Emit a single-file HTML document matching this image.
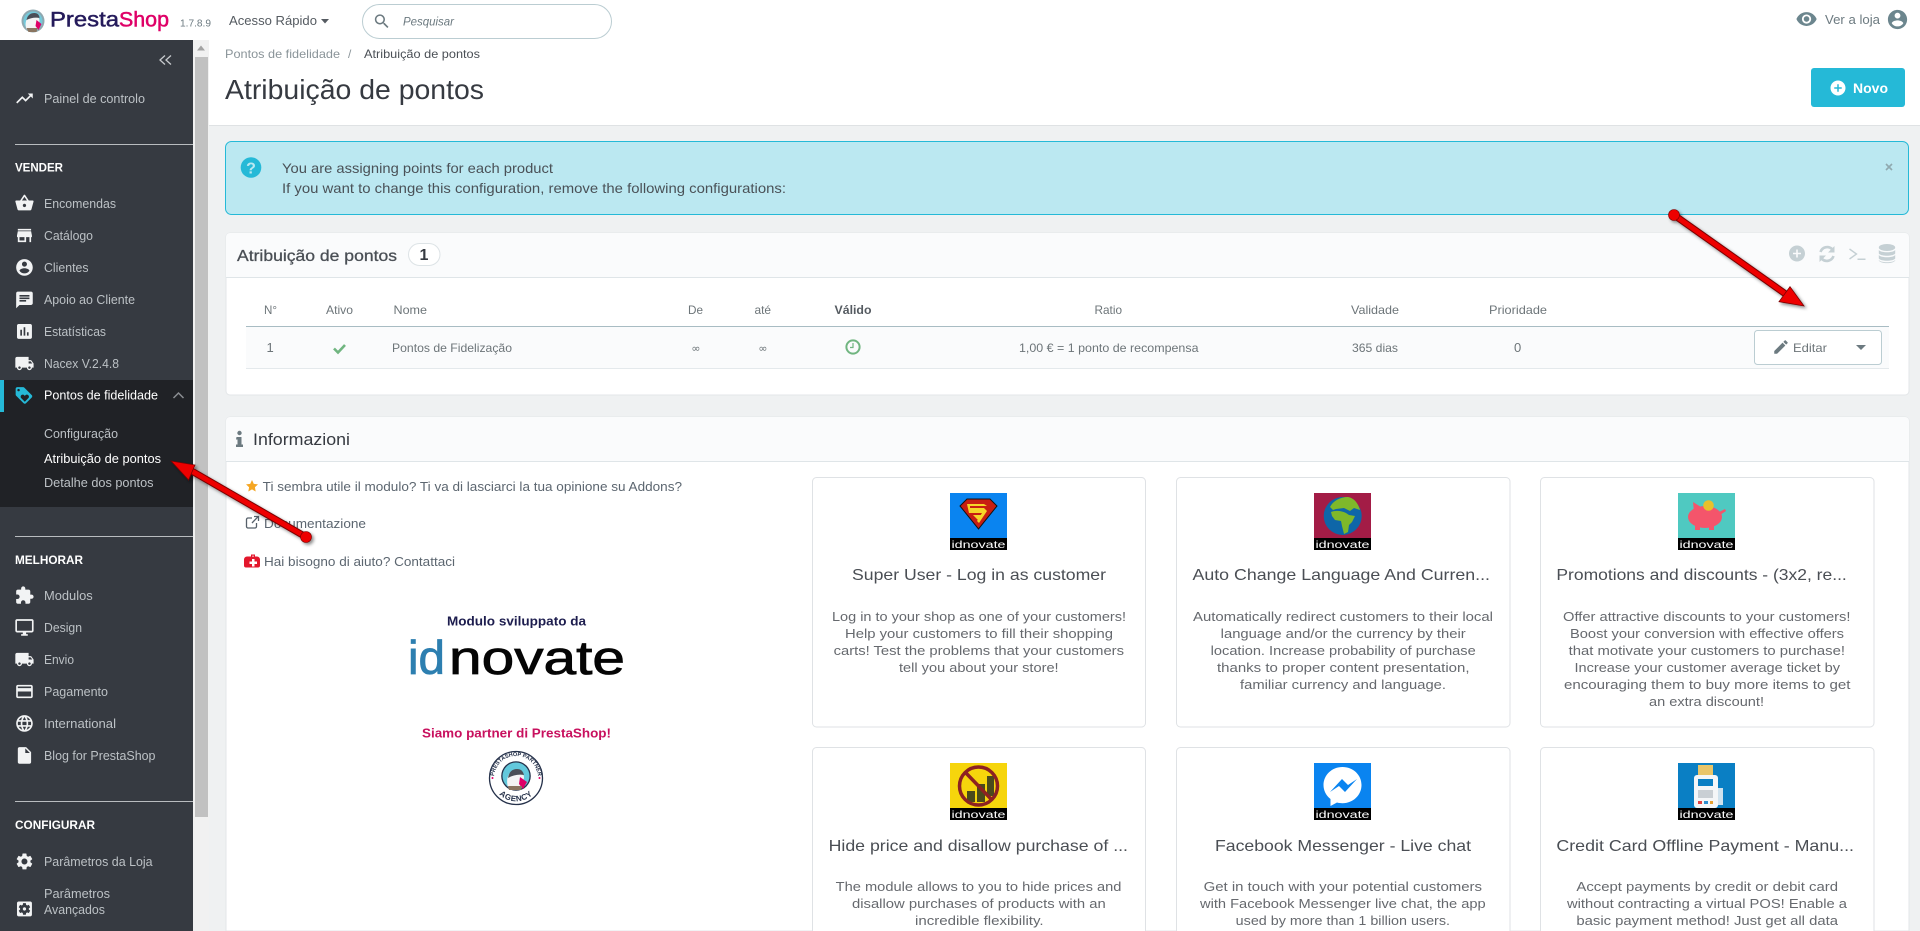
<!DOCTYPE html>
<html lang="pt">
<head>
<meta charset="utf-8">
<title>Atribuição de pontos</title>
<style>
html,body{margin:0;padding:0;width:1920px;height:931px;overflow:hidden;background:#eff1f2}
svg{display:block}
text{font-family:"Liberation Sans",sans-serif}
.n{font-size:13px;fill:#bcc1c5}
.h{font-size:12px;font-weight:700;fill:#fff}
.ic{fill:#f2f3f4}
.th{font-size:12px;fill:#6d7579}
.td{font-size:12px;fill:#6d7579}
.ln{font-size:13px;fill:#5c6670}
.ct{font-size:16px;fill:#4a4e54}
.cd{font-size:12.5px;fill:#66696e}
.lb{font-size:10px;fill:#fff}
</style>
</head>
<body>
<svg xmlns="http://www.w3.org/2000/svg" width="1920" height="931" viewBox="0 0 1920 931">
<defs>
<filter id="sh" x="-20%" y="-20%" width="140%" height="140%"><feDropShadow dx="2" dy="2" stdDeviation="1.5" flood-color="#000" flood-opacity=".45"/></filter>
<path id="bar" d="M0 0h57v12H0z" fill="#000"/>
<path id="ship" d="M20 8h-3V4H3c-1.1 0-2 .9-2 2v11h2c0 1.66 1.34 3 3 3s3-1.34 3-3h6c0 1.66 1.34 3 3 3s3-1.34 3-3h2v-5l-3-4zM6 18.5c-.83 0-1.5-.67-1.5-1.5s.67-1.5 1.5-1.5 1.5.67 1.5 1.5-.67 1.5-1.5 1.5zm13.5-9l1.96 2.5H17V9.5h2.5zm-1.5 9c-.83 0-1.5-.67-1.5-1.5s.67-1.5 1.5-1.5 1.5.67 1.5 1.5-.67 1.5-1.5 1.5z"/>
<path id="acc" d="M12 2C6.48 2 2 6.48 2 12s4.48 10 10 10 10-4.48 10-10S17.52 2 12 2zm0 3c1.66 0 3 1.34 3 3s-1.34 3-3 3-3-1.34-3-3 1.34-3 3-3zm0 14.2c-2.5 0-4.71-1.28-6-3.22.03-1.99 4-3.08 6-3.08 1.99 0 5.97 1.09 6 3.08-1.29 1.94-3.5 3.22-6 3.22z"/>
<path id="add" d="M12 2C6.48 2 2 6.48 2 12s4.48 10 10 10 10-4.48 10-10S17.52 2 12 2zm5 11h-4v4h-2v-4H7v-2h4V7h2v4h4v2z"/>
<path id="arcT" d="M495.500 786A22 22 0 1 1 536.500 786"/>
<path id="arcB" d="M494.500 788A24 24 0 0 0 537.500 788"/>
</defs>

<!-- base -->
<rect width="1920" height="931" fill="#eff1f2"/>

<!-- header -->
<rect width="1920" height="40" fill="#fff"/>
<circle cx="33" cy="21" r="11.500" fill="#8fa8b0"/>
<circle cx="33" cy="21" r="9.500" fill="#74c9da"/>
<path d="M26.500 29c-2-5-1-12 6-14 5-1 7 3 7 6l-2 7c-3 3-8 3-11 1z" fill="#f4f4f4"/>
<path d="M26.500 20c1-5 4-7 8-7 3 0 5 2 5 5-4-1-9 0-13 2z" fill="#4a4f57"/>
<path d="M36.500 20l5 4-3 6-3-4z" fill="#df0067"/>
<path d="M26.500 28h11l-1 4h-8z" fill="#8a7560"/>
<text x="50" y="26.500" font-size="21" fill="#251b5b" stroke="#251b5b" stroke-width=".5" textLength="69" lengthAdjust="spacingAndGlyphs">Presta</text>
<text x="119" y="26.500" font-size="21" fill="#df0067" stroke="#df0067" stroke-width=".5" textLength="50" lengthAdjust="spacingAndGlyphs">Shop</text>
<text x="180" y="26.500" font-size="10.500" fill="#6c7a80" textLength="31" lengthAdjust="spacingAndGlyphs">1.7.8.9</text>
<text x="229" y="25" font-size="13" fill="#555b61" textLength="88" lengthAdjust="spacingAndGlyphs">Acesso Rápido</text>
<path d="M321 19h8l-4 4.500z" fill="#555b61"/>
<rect x="362.500" y="4.500" width="249" height="34" rx="17" fill="#fff" stroke="#bbcdd2"/>
<path transform="translate(372.500,12) scale(.78)" fill="#6c7a80" d="M15.500 14h-.79l-.28-.27C15.410 12.590 16 11.110 16 9.500 16 5.910 13.090 3 9.500 3S3 5.910 3 9.500 5.910 16 9.500 16c1.610 0 3.090-.59 4.230-1.570l.27.28v.79l5 4.990L20.490 19l-4.990-5zm-6 0C7.010 14 5 11.990 5 9.500S7.010 5 9.500 5 14 7.010 14 9.500 11.990 14 9.500 14z"/>
<text x="403" y="25.500" font-size="12" font-style="italic" fill="#6c7a80" textLength="51" lengthAdjust="spacingAndGlyphs">Pesquisar</text>
<path transform="translate(1795.500,8) scale(.92)" fill="#6c868e" d="M12 4.500C7 4.500 2.730 7.610 1 12c1.730 4.390 6 7.500 11 7.500s9.270-3.110 11-7.500c-1.730-4.390-6-7.500-11-7.500zM12 17c-2.760 0-5-2.240-5-5s2.240-5 5-5 5 2.240 5 5-2.240 5-5 5zm0-8c-1.660 0-3 1.340-3 3s1.340 3 3 3 3-1.340 3-3-1.340-3-3-3z"/>
<text x="1825" y="24" font-size="13" fill="#6c7a80" textLength="55" lengthAdjust="spacingAndGlyphs">Ver a loja</text>
<use href="#acc" transform="translate(1886,8) scale(.96)" fill="#6c868e"/>

<!-- scrollbar -->
<rect x="193" y="40" width="16" height="891" fill="#f1f1f1"/>
<path d="M201 45.500l4 5h-8z" fill="#a3a3a3"/>
<rect x="195" y="57" width="13" height="760" fill="#c1c1c1"/>

<!-- sidebar -->
<rect x="0" y="40" width="193" height="891" fill="#363a41"/>
<path d="M165 55.500l-5 4.500 5 4.500M171 55.500l-5 4.500 5 4.500" fill="none" stroke="#c7cacd" stroke-width="1.300"/>
<path class="ic" transform="translate(14.500,88.500) scale(.83)" d="M16 6l2.290 2.290-4.880 4.880-4-4L2 16.590 3.410 18l6-6 4 4 6.300-6.290L22 12V6z"/>
<text class="n" x="44" y="103" textLength="101" lengthAdjust="spacingAndGlyphs">Painel de controlo</text>
<rect x="15" y="144" width="178" height="1" fill="#b9bcbf"/>
<text class="h" x="15" y="171.500" textLength="48" lengthAdjust="spacingAndGlyphs">VENDER</text>
<path class="ic" transform="translate(14.500,193) scale(.83)" d="M17.210 9l-4.380-6.560c-.19-.28-.51-.42-.83-.42-.32 0-.64.14-.83.43L6.790 9H2c-.55 0-1 .45-1 1 0 .09.01.18.04.27l2.540 9.270c.23.84 1 1.460 1.920 1.460h13c.92 0 1.690-.62 1.930-1.460l2.540-9.270L23 10c0-.55-.45-1-1-1h-4.790zM9 9l3-4.400L15 9H9zm3 8c-1.100 0-2-.9-2-2s.9-2 2-2 2 .9 2 2-.9 2-2 2z"/>
<text class="n" x="44" y="208" textLength="72" lengthAdjust="spacingAndGlyphs">Encomendas</text>
<path class="ic" transform="translate(14.500,225.500) scale(.83)" d="M20 4H4v2h16V4zm1 10v-2l-1-5H4l-1 5v2h1v6h10v-6h4v6h2v-6h1zm-9 4H6v-4h6v4z"/>
<text class="n" x="44" y="240" textLength="49" lengthAdjust="spacingAndGlyphs">Catálogo</text>
<use href="#acc" class="ic" transform="translate(14.500,257.500) scale(.83)"/>
<text class="n" x="44" y="272" textLength="44.500" lengthAdjust="spacingAndGlyphs">Clientes</text>
<path class="ic" transform="translate(14.500,290) scale(.83)" d="M20 2H4c-1.100 0-1.990.9-1.990 2L2 22l4-4h14c1.100 0 2-.9 2-2V4c0-1.100-.9-2-2-2zM6 9h12v2H6V9zm8 5H6v-2h8v2zm4-6H6V6h12v2z"/>
<text class="n" x="44" y="304" textLength="91" lengthAdjust="spacingAndGlyphs">Apoio ao Cliente</text>
<path class="ic" transform="translate(14.500,321.500) scale(.83)" d="M19 3H5c-1.100 0-2 .9-2 2v14c0 1.100.9 2 2 2h14c1.100 0 2-.9 2-2V5c0-1.100-.9-2-2-2zM9 17H7v-7h2v7zm4 0h-2V7h2v10zm4 0h-2v-4h2v4z"/>
<text class="n" x="44" y="336" textLength="62" lengthAdjust="spacingAndGlyphs">Estatísticas</text>
<use href="#ship" class="ic" transform="translate(14.500,353.500) scale(.83)"/>
<text class="n" x="44" y="368" textLength="75" lengthAdjust="spacingAndGlyphs">Nacex V.2.4.8</text>
<rect x="0" y="380" width="193" height="127" fill="#202226"/>
<rect x="0" y="380" width="4" height="32" fill="#25b9d7"/>
<path fill="#25b9d7" transform="translate(14,385.500) scale(.83)" d="M21.410 11.580l-9-9C12.050 2.220 11.550 2 11 2H4c-1.100 0-2 .9-2 2v7c0 .55.22 1.050.59 1.420l9 9c.36.36.86.58 1.410.58.55 0 1.050-.22 1.410-.59l7-7c.37-.36.59-.86.59-1.410 0-.55-.23-1.060-.59-1.420zM5.500 7C4.670 7 4 6.330 4 5.500S4.670 4 5.500 4 7 4.670 7 5.500 6.330 7 5.500 7zm11.770 8.270L13 19.540l-4.270-4.270C8.280 14.810 8 14.190 8 13.500c0-1.380 1.120-2.500 2.500-2.500.69 0 1.320.28 1.770.74l.73.72.73-.73c.45-.45 1.080-.73 1.770-.73 1.380 0 2.500 1.120 2.500 2.500 0 .69-.28 1.320-.73 1.770z"/>
<text x="44" y="399.500" font-size="13" fill="#fff" textLength="114" lengthAdjust="spacingAndGlyphs">Pontos de fidelidade</text>
<path d="M173.500 398l5-5 5 5" fill="none" stroke="#8a8d91" stroke-width="1.500"/>
<text class="n" x="44" y="438" textLength="74" lengthAdjust="spacingAndGlyphs">Configuração</text>
<text x="44" y="463" font-size="13" fill="#fff" textLength="117" lengthAdjust="spacingAndGlyphs">Atribuição de pontos</text>
<text class="n" x="44" y="487" textLength="109.500" lengthAdjust="spacingAndGlyphs">Detalhe dos pontos</text>
<rect x="15" y="536" width="178" height="1" fill="#b9bcbf"/>
<text class="h" x="15" y="564" textLength="68" lengthAdjust="spacingAndGlyphs">MELHORAR</text>
<path class="ic" transform="translate(14.500,585.500) scale(.83)" d="M20.500 11H19V7c0-1.100-.9-2-2-2h-4V3.500C13 2.120 11.880 1 10.500 1S8 2.120 8 3.500V5H4c-1.100 0-1.990.9-1.990 2v3.800H3.500c1.490 0 2.700 1.210 2.700 2.700s-1.210 2.700-2.700 2.700H2V20c0 1.100.9 2 2 2h3.800v-1.500c0-1.490 1.210-2.700 2.700-2.700 1.490 0 2.700 1.210 2.700 2.700V22H17c1.100 0 2-.9 2-2v-4h1.500c1.380 0 2.500-1.120 2.500-2.500S21.880 11 20.500 11z"/>
<text class="n" x="44" y="600" textLength="48.700" lengthAdjust="spacingAndGlyphs">Modulos</text>
<path class="ic" transform="translate(14.500,617.500) scale(.83)" d="M21 2H3c-1.100 0-2 .9-2 2v12c0 1.100.9 2 2 2h7v2H8v2h8v-2h-2v-2h7c1.100 0 2-.9 2-2V4c0-1.100-.9-2-2-2zm0 14H3V4h18v12z"/>
<text class="n" x="44" y="632" textLength="38" lengthAdjust="spacingAndGlyphs">Design</text>
<use href="#ship" class="ic" transform="translate(14.500,649.500) scale(.83)"/>
<text class="n" x="44" y="664" textLength="30" lengthAdjust="spacingAndGlyphs">Envio</text>
<path class="ic" transform="translate(14.500,681.500) scale(.83)" d="M20 4H4c-1.110 0-1.990.89-1.990 2L2 18c0 1.110.89 2 2 2h16c1.110 0 2-.89 2-2V6c0-1.110-.89-2-2-2zm0 14H4v-6h16v6zm0-10H4V6h16v2z"/>
<text class="n" x="44" y="696" textLength="64" lengthAdjust="spacingAndGlyphs">Pagamento</text>
<path class="ic" transform="translate(14.500,713.500) scale(.83)" d="M11.990 2C6.470 2 2 6.480 2 12s4.470 10 9.990 10C17.520 22 22 17.520 22 12S17.520 2 11.990 2zm6.930 6h-2.950c-.32-1.250-.78-2.450-1.380-3.560 1.840.63 3.370 1.910 4.330 3.560zM12 4.040c.83 1.200 1.480 2.530 1.910 3.960h-3.820c.43-1.430 1.080-2.760 1.910-3.960zM4.260 14C4.100 13.360 4 12.690 4 12s.1-1.360.26-2h3.380c-.08.66-.14 1.320-.14 2 0 .68.06 1.340.14 2H4.260zm.82 2h2.950c.32 1.250.78 2.450 1.380 3.560-1.840-.63-3.370-1.900-4.330-3.560zm2.950-8H5.080c.96-1.660 2.490-2.930 4.330-3.560C8.810 5.550 8.350 6.750 8.030 8zM12 19.960c-.83-1.200-1.480-2.530-1.910-3.960h3.820c-.43 1.430-1.080 2.760-1.910 3.960zM14.340 14H9.660c-.09-.66-.16-1.320-.16-2 0-.68.07-1.350.16-2h4.680c.09.65.16 1.320.16 2 0 .68-.07 1.340-.16 2zm.25 5.560c.6-1.110 1.060-2.310 1.380-3.560h2.950c-.96 1.650-2.490 2.930-4.330 3.560zM16.360 14c.08-.66.14-1.320.14-2 0-.68-.06-1.340-.14-2h3.380c.16.64.26 1.310.26 2s-.1 1.360-.26 2h-3.380z"/>
<text class="n" x="44" y="728" textLength="72" lengthAdjust="spacingAndGlyphs">International</text>
<path class="ic" transform="translate(14.500,745.500) scale(.83)" d="M6 2c-1.100 0-1.990.9-1.990 2L4 20c0 1.100.89 2 1.990 2H18c1.100 0 2-.9 2-2V8l-6-6H6zm7 7V3.500L18.500 9H13z"/>
<text class="n" x="44" y="760" textLength="111.500" lengthAdjust="spacingAndGlyphs">Blog for PrestaShop</text>
<rect x="15" y="801" width="178" height="1" fill="#b9bcbf"/>
<text class="h" x="15" y="829" textLength="80" lengthAdjust="spacingAndGlyphs">CONFIGURAR</text>
<path class="ic" transform="translate(14.500,851.500) scale(.83)" d="M19.140 12.940c.04-.3.06-.61.06-.94 0-.32-.02-.64-.07-.94l2.030-1.580c.18-.14.23-.41.12-.61l-1.920-3.320c-.12-.22-.37-.29-.59-.22l-2.390.96c-.5-.38-1.030-.7-1.620-.94l-.36-2.540c-.04-.24-.24-.41-.48-.41h-3.840c-.24 0-.43.17-.47.41l-.36 2.540c-.59.24-1.130.57-1.620.94l-2.390-.96c-.22-.08-.47 0-.59.22L2.740 8.870c-.12.21-.08.47.12.61l2.030 1.580c-.05.3-.09.63-.09.94s.02.64.07.94l-2.030 1.580c-.18.14-.23.41-.12.61l1.920 3.320c.12.22.37.29.59.22l2.390-.96c.5.38 1.030.7 1.620.94l.36 2.540c.05.24.24.41.48.41h3.840c.24 0 .44-.17.47-.41l.36-2.540c.59-.24 1.130-.56 1.620-.94l2.390.96c.22.08.47 0 .59-.22l1.920-3.320c.12-.22.07-.47-.12-.61l-2.010-1.580zM12 15.600c-1.980 0-3.600-1.620-3.600-3.600s1.620-3.600 3.600-3.600 3.600 1.620 3.600 3.600-1.620 3.600-3.600 3.600z"/>
<text class="n" x="44" y="866" textLength="108.600" lengthAdjust="spacingAndGlyphs">Parâmetros da Loja</text>
<text class="n" x="44" y="898" textLength="66" lengthAdjust="spacingAndGlyphs">Parâmetros</text>
<text class="n" x="44" y="914" textLength="61" lengthAdjust="spacingAndGlyphs">Avançados</text>
<path class="ic" transform="translate(14.500,899) scale(.83)" d="M12 10c-1.100 0-2 .9-2 2s.9 2 2 2 2-.9 2-2-.9-2-2-2zm7-7H5c-1.110 0-2 .9-2 2v14c0 1.100.89 2 2 2h14c1.110 0 2-.9 2-2V5c0-1.100-.89-2-2-2zm-1.750 9c0 .23-.02.46-.05.68l1.480 1.160c.13.11.17.3.08.45l-1.400 2.420c-.09.15-.27.21-.43.15l-1.740-.7c-.36.28-.76.51-1.180.69l-.26 1.850c-.03.17-.18.3-.35.3h-2.800c-.17 0-.32-.13-.35-.29l-.26-1.850c-.43-.18-.82-.41-1.180-.69l-1.740.7c-.16.06-.34 0-.43-.15l-1.400-2.420c-.09-.15-.05-.34.08-.45l1.480-1.160c-.03-.23-.05-.46-.05-.69 0-.23.02-.46.05-.68l-1.480-1.160c-.13-.11-.17-.3-.08-.45l1.400-2.420c.09-.15.27-.21.43-.15l1.740.7c.36-.28.76-.51 1.180-.69l.26-1.850c.03-.17.18-.3.35-.3h2.800c.17 0 .32.13.35.29l.26 1.850c.43.18.82.41 1.180.69l1.740-.7c.16-.06.34 0 .43.15l1.400 2.420c.09.15.05.34-.08.45l-1.480 1.160c.03.23.05.46.05.69z"/>

<!-- page head -->
<rect x="209" y="40" width="1711" height="85" fill="#fff"/>
<rect x="209" y="125" width="1711" height="1" fill="#dfe2e4"/>
<text x="225" y="58" font-size="12" fill="#8a9499" textLength="115" lengthAdjust="spacingAndGlyphs">Pontos de fidelidade</text>
<text x="348" y="58" font-size="12" fill="#8a9499">/</text>
<text x="364" y="58" font-size="12" fill="#4a4f55" textLength="116" lengthAdjust="spacingAndGlyphs">Atribuição de pontos</text>
<text x="225" y="99" font-size="28" fill="#363a41" textLength="259" lengthAdjust="spacingAndGlyphs">Atribuição de pontos</text>
<rect x="1811" y="68" width="94" height="39" rx="3" fill="#25b9d7"/>
<use href="#add" fill="#fff" transform="translate(1829,79) scale(.75)"/>
<text x="1853" y="93" font-size="14" font-weight="700" fill="#fff" textLength="35" lengthAdjust="spacingAndGlyphs">Novo</text>

<!-- alert -->
<rect x="225.500" y="141.500" width="1683" height="73" rx="6" fill="#bbe8f1" stroke="#25b9d7"/>
<circle cx="251" cy="167.500" r="10.300" fill="#25b9d7"/>
<text x="251" y="173.500" font-size="16" font-weight="700" fill="#bbe8f1" text-anchor="middle">?</text>
<text x="282" y="173" font-size="14" fill="#4a5157" textLength="271" lengthAdjust="spacingAndGlyphs">You are assigning points for each product</text>
<text x="282" y="193" font-size="14" fill="#4a5157" textLength="504" lengthAdjust="spacingAndGlyphs">If you want to change this configuration, remove the following configurations:</text>
<path d="M1886 164l6 6M1892 164l-6 6" stroke="#8fa9af" stroke-width="1.600" fill="none"/>

<!-- panel 1 -->
<rect x="226" y="233" width="1683" height="162" rx="4" fill="#fff" stroke="#e3e6e8"/>
<path d="M226 277v-40a4 4 0 0 1 4-4h1675a4 4 0 0 1 4 4v40z" fill="#fafbfc"/>
<rect x="226" y="277" width="1683" height="1" fill="#dfe5e8"/>
<text x="237" y="261" font-size="16" fill="#4a4f55" stroke="#4a4f55" stroke-width=".3" textLength="160" lengthAdjust="spacingAndGlyphs">Atribuição de pontos</text>
<rect x="408.500" y="243.500" width="31.500" height="22" rx="11" fill="#fff" stroke="#dde3e6"/>
<text x="424" y="260" font-size="16" font-weight="700" fill="#363a41" text-anchor="middle">1</text>
<use href="#add" fill="#c5d0d4" transform="translate(1787.400,243.900) scale(.8)"/>
<path d="M1820.500 252a7 7 0 0 1 11.500-3M1833.500 256a7 7 0 0 1-11.500 3" fill="none" stroke="#c5d0d4" stroke-width="2.600"/>
<path d="M1834.500 246v6.500h-6.500zM1819.500 262v-6.500h6.500z" fill="#c5d0d4"/>
<path d="M1849.500 249l7 5-7 5" fill="none" stroke="#c5d0d4" stroke-width="1.400"/>
<rect x="1857.500" y="258.500" width="8" height="1.500" fill="#c5d0d4"/>
<g fill="#c5d0d4">
<ellipse cx="1887" cy="247.500" rx="8.200" ry="3.500"/>
<path d="M1878.800 250c2 3 14.400 3 16.400 0v3.500c-2 3-14.400 3-16.400 0zM1878.800 255c2 3 14.400 3 16.400 0v3.500c-2 3-14.400 3-16.400 0zM1878.800 260c2 3 14.400 3 16.400 0v.5c-2 3.500-14.400 3.500-16.400 0z"/>
</g>
<text class="th" x="264" y="314" textLength="13" lengthAdjust="spacingAndGlyphs">N°</text>
<text class="th" x="326" y="314" textLength="27" lengthAdjust="spacingAndGlyphs">Ativo</text>
<text class="th" x="393.500" y="314" textLength="33.500" lengthAdjust="spacingAndGlyphs">Nome</text>
<text class="th" x="688" y="314" textLength="15" lengthAdjust="spacingAndGlyphs">De</text>
<text class="th" x="754.500" y="314" textLength="16.500" lengthAdjust="spacingAndGlyphs">até</text>
<text x="834.500" y="314" font-size="12" font-weight="700" fill="#555b61" textLength="37" lengthAdjust="spacingAndGlyphs">Válido</text>
<text class="th" x="1094.500" y="314" textLength="27.500" lengthAdjust="spacingAndGlyphs">Ratio</text>
<text class="th" x="1351" y="314" textLength="48" lengthAdjust="spacingAndGlyphs">Validade</text>
<text class="th" x="1489" y="314" textLength="58" lengthAdjust="spacingAndGlyphs">Prioridade</text>
<rect x="246" y="327" width="1643" height="41" fill="#fafbfc"/>
<rect x="246" y="326" width="1643" height="1" fill="#a8bcc3"/>
<rect x="246" y="368" width="1643" height="1" fill="#e4e9ec"/>
<text x="266.500" y="352" font-size="13" fill="#6d7579">1</text>
<path d="M334 348.500l4 4 7-7.500" fill="none" stroke="#70b580" stroke-width="2.600"/>
<text class="td" x="392" y="352" textLength="120" lengthAdjust="spacingAndGlyphs">Pontos de Fidelização</text>
<text x="696" y="352" font-size="11" fill="#6d7579" text-anchor="middle" style="font-family:'DejaVu Sans',sans-serif">∞</text>
<text x="763" y="352" font-size="11" fill="#6d7579" text-anchor="middle" style="font-family:'DejaVu Sans',sans-serif">∞</text>
<circle cx="853" cy="347" r="6.600" fill="none" stroke="#70b580" stroke-width="2"/>
<path d="M853 343v4.500h-3" fill="none" stroke="#70b580" stroke-width="1.200"/>
<text class="td" x="1019" y="352" textLength="179.500" lengthAdjust="spacingAndGlyphs">1,00 € = 1 ponto de recompensa</text>
<text class="td" x="1352" y="352" textLength="46" lengthAdjust="spacingAndGlyphs">365 dias</text>
<text x="1514" y="352" font-size="13" fill="#6d7579">0</text>
<rect x="1754.500" y="330.500" width="127" height="34" rx="3" fill="#fff" stroke="#bbcdd2"/>
<path fill="#6c7a80" transform="translate(1772,338) scale(.75)" d="M3 17.250V21h3.750L17.810 9.940l-3.750-3.750L3 17.250zM20.710 7.040c.39-.39.39-1.020 0-1.410l-2.340-2.340c-.39-.39-1.020-.39-1.410 0l-1.830 1.830 3.750 3.750 1.830-1.830z"/>
<text x="1793" y="352" font-size="12" fill="#6d7579" textLength="34" lengthAdjust="spacingAndGlyphs">Editar</text>
<path d="M1856 345h10l-5 5z" fill="#6c7a80"/>

<!-- panel 2 -->
<path d="M226 931V421a4 4 0 0 1 4-4h1675a4 4 0 0 1 4 4v510z" fill="#fff" stroke="#e3e6e8"/>
<path d="M226 461v-40a4 4 0 0 1 4-4h1675a4 4 0 0 1 4 4v40z" fill="#fafbfc"/>
<rect x="226" y="461" width="1683" height="1" fill="#dfe5e8"/>
<g fill="#6c7a80"><circle cx="239.500" cy="433" r="2.200"/><path d="M236.500 437h5v7.500h1.500v2.500h-7v-2.500h1.500V439.500h-1.500z"/></g>
<text x="253" y="445" font-size="16.500" fill="#363a41" textLength="97" lengthAdjust="spacingAndGlyphs">Informazioni</text>

<path d="M252 480l1.800 3.900 4.200.5-3.100 2.900.8 4.200-3.700-2.100-3.700 2.100.8-4.200-3.100-2.900 4.200-.5z" fill="#f5a623"/>
<text class="ln" x="262.700" y="491" textLength="419.300" lengthAdjust="spacingAndGlyphs">Ti sembra utile il modulo? Ti va di lasciarci la tua opinione su Addons?</text>
<path d="M256.500 523v3.500a1.500 1.500 0 0 1-1.500 1.500h-7a1.500 1.500 0 0 1-1.500-1.500v-7a1.500 1.500 0 0 1 1.500-1.500h4M252 523l6-6.300M254 516.500h4.500v4.500" fill="none" stroke="#56606a" stroke-width="1.300"/>
<text class="ln" x="264" y="528" textLength="102" lengthAdjust="spacingAndGlyphs">Documentazione</text>
<path d="M249 556.500h2v-2h4v2h2a3 3 0 0 1 3 3v6a2 2 0 0 1-2 2h-12a2 2 0 0 1-2-2v-6a3 3 0 0 1 3-3zm3-.8v.8h2v-.8z" fill="#e3172c"/>
<path d="M252 559h2.500v2.500h2.500v2.500h-2.500v2.500h-2.500v-2.500h-2.500v-2.500h2.500z" fill="#fff"/>
<text class="ln" x="264" y="566" textLength="191" lengthAdjust="spacingAndGlyphs">Hai bisogno di aiuto? Contattaci</text>
<text x="447" y="625.500" font-size="13" font-weight="700" fill="#1d1d4e" textLength="139" lengthAdjust="spacingAndGlyphs">Modulo sviluppato da</text>
<text x="408" y="674" font-size="47" fill="#2d7fb0" stroke="#2d7fb0" stroke-width=".8" textLength="37" lengthAdjust="spacingAndGlyphs">id</text>
<text x="449" y="674" font-size="47" fill="#050505" stroke="#050505" stroke-width=".8" textLength="176" lengthAdjust="spacingAndGlyphs">novate</text>
<text x="422" y="737.500" font-size="13" font-weight="700" fill="#c8105e" textLength="189" lengthAdjust="spacingAndGlyphs">Siamo partner di PrestaShop!</text>
<circle cx="516" cy="778" r="26.500" fill="#fff" stroke="#25314a" stroke-width="1.300"/>
<circle cx="516" cy="776" r="14.800" fill="#25314a"/>
<circle cx="516" cy="776" r="13.500" fill="#63c9dc"/>
<path d="M508 787c-2-6-1-15 7-17 6-1 9 3 9 8l-3 9c-4 3-10 3-13 0z" fill="#f4f4f4"/>
<path d="M508 778c1-6 4-9 9-9 4 0 6 2 7 6-5-1-11 0-16 3z" fill="#4a4f57"/>
<path d="M520 777l7 5-4 7-4-5z" fill="#df0067"/>
<path d="M508 786h14l-1 4h-12z" fill="#8a7560"/>
<text font-size="5.500" font-weight="700" fill="#25314a" text-anchor="middle"><textPath href="#arcT" startOffset="50%">PRESTASHOP PARTNER</textPath></text>
<text font-size="8" font-weight="700" fill="#25314a" text-anchor="middle" letter-spacing=".5"><textPath href="#arcB" startOffset="50%">AGENCY</textPath></text>
<circle cx="492.500" cy="778" r="1" fill="#df0067"/><circle cx="539.500" cy="778" r="1" fill="#df0067"/>

<!-- cards row 1 -->
<rect x="812.500" y="477.500" width="333" height="249.500" rx="4" fill="#fff" stroke="#dfe2e5"/>
<rect x="1176.500" y="477.500" width="333.500" height="249.500" rx="4" fill="#fff" stroke="#dfe2e5"/>
<rect x="1540.500" y="477.500" width="333.500" height="249.500" rx="4" fill="#fff" stroke="#dfe2e5"/>
<!-- cards row 2 -->
<path d="M812.500 931V751.500a4 4 0 0 1 4-4h325a4 4 0 0 1 4 4V931" fill="#fff" stroke="#dfe2e5"/>
<path d="M1176.500 931V751.500a4 4 0 0 1 4-4h325.500a4 4 0 0 1 4 4V931" fill="#fff" stroke="#dfe2e5"/>
<path d="M1540.500 931V751.500a4 4 0 0 1 4-4h325.500a4 4 0 0 1 4 4V931" fill="#fff" stroke="#dfe2e5"/>

<!-- logo superman -->
<rect x="950" y="493" width="57" height="46" fill="#0a84f0"/>
<path d="M960 506l7-7h23l7 7-18.500 23z" fill="#c81e12" stroke="#111" stroke-width="1"/>
<path d="M967 504h17l3 2h-17v2h14l3 3-8 12-2-2 5-8h-13zM973 515h9l-4 5z" fill="#f6d528"/>
<use href="#bar" x="950" y="538"/>
<text class="lb" x="951.500" y="548" textLength="54" lengthAdjust="spacingAndGlyphs">idnovate</text>
<!-- logo globe -->
<rect x="1314" y="493" width="57" height="46" fill="#a31c46"/>
<circle cx="1342.700" cy="516" r="19" fill="#0e66a8"/>
<path d="M1330 507c3-6 10-10 18-10 6 1 10 6 12 13l-6-2-4 3-6-3-8 1-3 1z" fill="#7fb82a"/>
<path d="M1331 512c5-2 11-1 15 1l3 2 6 1-3 6-3 3-1 7-4 2-2-8-1-5-6-1-3-4z" fill="#7fb82a"/>
<use href="#bar" x="1314" y="538"/>
<text class="lb" x="1315.500" y="548" textLength="54" lengthAdjust="spacingAndGlyphs">idnovate</text>
<!-- logo pig -->
<rect x="1678" y="493" width="57" height="46" fill="#4fc9c1"/>
<ellipse cx="1705" cy="517" rx="17" ry="11" fill="#f4556b"/>
<path d="M1693 502l8 5-7 5zM1695 525h5v5h-5zM1709 525h5v5h-5zM1719 512l6-3 1 2-6 4z" fill="#f4556b"/>
<circle cx="1708.500" cy="505.500" r="5.300" fill="#e8c12b"/>
<use href="#bar" x="1678" y="538"/>
<text class="lb" x="1679.500" y="548" textLength="54" lengthAdjust="spacingAndGlyphs">idnovate</text>
<!-- logo no-coins -->
<rect x="950" y="763" width="57" height="46" fill="#f6d50c"/>
<g fill="#4a4a1c"><rect x="967" y="791" width="8" height="11"/><rect x="977" y="784" width="8" height="18"/><rect x="987" y="776" width="7" height="20"/></g>
<circle cx="978.500" cy="786" r="19" fill="none" stroke="#8d2222" stroke-width="3.500"/>
<path d="M965 772l27 28" stroke="#8d2222" stroke-width="3.500"/>
<use href="#bar" x="950" y="808"/>
<text class="lb" x="951.500" y="818" textLength="54" lengthAdjust="spacingAndGlyphs">idnovate</text>
<!-- logo messenger -->
<rect x="1314" y="763" width="57" height="46" fill="#0a84f0"/>
<path d="M1342.500 767c-10.500 0-19 8-19 18 0 5.500 2.500 10.500 7 14v7l6.500-3.500c1.800.5 3.500.7 5.500.7 10.500 0 19-8 19-18.200s-8.500-18-19-18z" fill="#fff"/>
<path d="M1330 792l12-13 6 6 9-6-12 13-6-6z" fill="#0a84f0"/>
<use href="#bar" x="1314" y="808"/>
<text class="lb" x="1315.500" y="818" textLength="54" lengthAdjust="spacingAndGlyphs">idnovate</text>
<!-- logo card -->
<rect x="1678" y="763" width="57" height="46" fill="#0a7fc4"/>
<rect x="1698" y="765" width="15" height="12" fill="#e8c56a"/>
<rect x="1694" y="775" width="24" height="33" rx="3" fill="#f4f6f8"/>
<rect x="1698" y="779" width="15" height="7" fill="#0a7fc4"/>
<rect x="1718" y="788" width="5" height="17" fill="#cfe2ee"/>
<g fill="#c9cfd4"><rect x="1698" y="790" width="15" height="8"/></g>
<rect x="1698" y="801" width="4" height="3" fill="#e34040"/><rect x="1704" y="801" width="4" height="3" fill="#2d8fd0"/><rect x="1710" y="801" width="3" height="3" fill="#e8a030"/>
<use href="#bar" x="1678" y="808"/>
<text class="lb" x="1679.500" y="818" textLength="54" lengthAdjust="spacingAndGlyphs">idnovate</text>

<!-- card text row 1 -->
<text class="ct" x="852" y="580" textLength="254" lengthAdjust="spacingAndGlyphs">Super User - Log in as customer</text>
<text class="cd" x="832" y="621" textLength="294" lengthAdjust="spacingAndGlyphs">Log in to your shop as one of your customers!</text>
<text class="cd" x="845" y="638" textLength="268" lengthAdjust="spacingAndGlyphs">Help your customers to fill their shopping</text>
<text class="cd" x="833.600" y="655" textLength="290.400" lengthAdjust="spacingAndGlyphs">carts! Test the problems that your customers</text>
<text class="cd" x="899" y="672" textLength="159.600" lengthAdjust="spacingAndGlyphs">tell you about your store!</text>

<text class="ct" x="1192.500" y="580" textLength="297.500" lengthAdjust="spacingAndGlyphs">Auto Change Language And Curren...</text>
<text class="cd" x="1193" y="621" textLength="300" lengthAdjust="spacingAndGlyphs">Automatically redirect customers to their local</text>
<text class="cd" x="1220.700" y="638" textLength="245" lengthAdjust="spacingAndGlyphs">language and/or the currency by their</text>
<text class="cd" x="1210.700" y="655" textLength="265" lengthAdjust="spacingAndGlyphs">location. Increase probability of purchase</text>
<text class="cd" x="1217" y="672" textLength="252.500" lengthAdjust="spacingAndGlyphs">thanks to proper content presentation,</text>
<text class="cd" x="1240" y="689" textLength="206" lengthAdjust="spacingAndGlyphs">familiar currency and language.</text>

<text class="ct" x="1556.400" y="580" textLength="290.400" lengthAdjust="spacingAndGlyphs">Promotions and discounts - (3x2, re...</text>
<text class="cd" x="1563" y="621" textLength="287.500" lengthAdjust="spacingAndGlyphs">Offer attractive discounts to your customers!</text>
<text class="cd" x="1570" y="638" textLength="274" lengthAdjust="spacingAndGlyphs">Boost your conversion with effective offers</text>
<text class="cd" x="1568.600" y="655" textLength="276.400" lengthAdjust="spacingAndGlyphs">that motivate your customers to purchase!</text>
<text class="cd" x="1574.500" y="672" textLength="265.500" lengthAdjust="spacingAndGlyphs">Increase your customer average ticket by</text>
<text class="cd" x="1564" y="689" textLength="286.500" lengthAdjust="spacingAndGlyphs">encouraging them to buy more items to get</text>
<text class="cd" x="1649" y="706" textLength="115" lengthAdjust="spacingAndGlyphs">an extra discount!</text>

<!-- card text row 2 -->
<text class="ct" x="828.600" y="851" textLength="299.400" lengthAdjust="spacingAndGlyphs">Hide price and disallow purchase of ...</text>
<text class="cd" x="835.700" y="891" textLength="285.700" lengthAdjust="spacingAndGlyphs">The module allows to you to hide prices and</text>
<text class="cd" x="852" y="908" textLength="253.700" lengthAdjust="spacingAndGlyphs">disallow purchases of products with an</text>
<text class="cd" x="915" y="925" textLength="128.600" lengthAdjust="spacingAndGlyphs">incredible flexibility.</text>

<text class="ct" x="1215" y="851" textLength="256" lengthAdjust="spacingAndGlyphs">Facebook Messenger - Live chat</text>
<text class="cd" x="1203.600" y="891" textLength="278.400" lengthAdjust="spacingAndGlyphs">Get in touch with your potential customers</text>
<text class="cd" x="1200" y="908" textLength="285.700" lengthAdjust="spacingAndGlyphs">with Facebook Messenger live chat, the app</text>
<text class="cd" x="1235.700" y="925" textLength="214.300" lengthAdjust="spacingAndGlyphs">used by more than 1 billion users.</text>

<text class="ct" x="1556.400" y="851" textLength="297.600" lengthAdjust="spacingAndGlyphs">Credit Card Offline Payment - Manu...</text>
<text class="cd" x="1576.400" y="891" textLength="261.600" lengthAdjust="spacingAndGlyphs">Accept payments by credit or debit card</text>
<text class="cd" x="1567" y="908" textLength="280" lengthAdjust="spacingAndGlyphs">without contracting a virtual POS! Enable a</text>
<text class="cd" x="1576.400" y="925" textLength="261.600" lengthAdjust="spacingAndGlyphs">basic payment method! Just get all data</text>

<!-- arrows -->
<g filter="url(#sh)">
<line x1="306" y1="537" x2="190" y2="470" stroke="#7a0000" stroke-width="7"/>
<line x1="306" y1="537" x2="190" y2="470" stroke="#ee0000" stroke-width="5"/>
<circle cx="306" cy="537" r="5.500" fill="#ee0000" stroke="#7a0000" stroke-width=".6"/>
<path d="M171 461l24 4-6.400 15z" fill="#ee0000" stroke="#7a0000" stroke-width=".8"/>
</g>
<g filter="url(#sh)">
<line x1="1674" y1="215" x2="1787" y2="295" stroke="#7a0000" stroke-width="7"/>
<line x1="1674" y1="215" x2="1787" y2="295" stroke="#ee0000" stroke-width="5"/>
<circle cx="1674" cy="215" r="5.500" fill="#ee0000" stroke="#7a0000" stroke-width=".6"/>
<path d="M1804 306l-14-19.300-11 15z" fill="#ee0000" stroke="#7a0000" stroke-width=".8"/>
</g>
</svg>
</body>
</html>
